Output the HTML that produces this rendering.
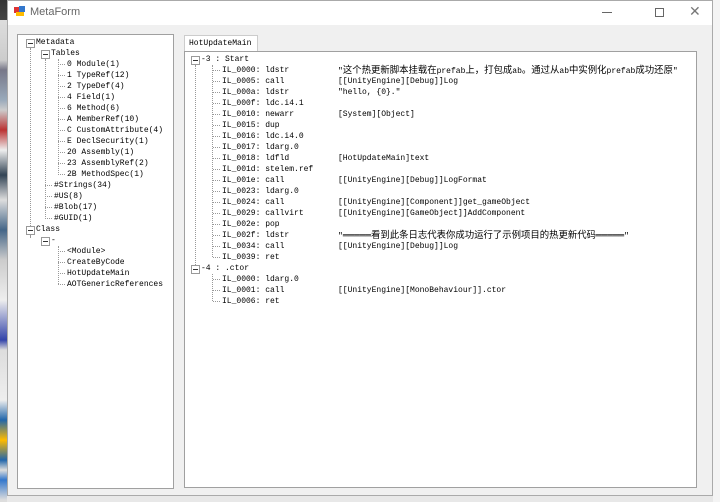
<!DOCTYPE html>
<html><head><meta charset="utf-8"><style>
*{margin:0;padding:0;box-sizing:border-box}
body{width:720px;height:502px;overflow:hidden;background:#e8e8e8;position:relative;font-family:"Liberation Mono","Noto Sans CJK SC",monospace;font-size:8px;color:#000}
.a{position:absolute;white-space:nowrap}
#win{position:absolute;left:7px;top:0;width:706px;height:496px;background:#f0f0f0;border:1px solid #aaa}
#title{position:absolute;left:0;top:0;width:704px;height:24px;background:#fff}
.panel{position:absolute;background:#fff;border:1px solid #a0a0a0}
.t{position:absolute;white-space:nowrap;line-height:11px;height:11px}
.cn{font-family:"Liberation Mono","Noto Sans CJK SC",sans-serif}
.cn b{font-weight:normal;font-size:9.4px}
.ex{position:absolute;width:9px;height:9px;border:1px solid #999;background:#fff}
.ex:after{content:"";position:absolute;left:1px;top:3px;width:5px;height:1px;background:#333}
.vl{position:absolute;border-left:1px dotted #999}
.rows .t:before{content:"";position:absolute;left:-9px;top:5px;width:7px;border-top:1px dotted #999}
.op{position:absolute;left:116px}
</style></head><body>
<div class="a" style="left:0;top:0;width:7px;height:502px;background:linear-gradient(#333 0,#444 20px,#ddd 20px,#ccc 60px,#778 70px,#9ab 100px,#ccc 110px,#b33 130px,#eee 150px,#345 175px,#ddd 200px,#468 230px,#ccc 260px,#eee 300px,#34a 340px,#ddd 350px,#eee 400px,#26a 420px,#fb0 440px,#26a 460px,#ddd 470px,#37c 480px,#ddd 500px)"></div>
<div class="a" style="left:713px;top:0;width:7px;height:502px;background:#f4f4f4"></div>
<div id="win">
 <div id="title">
  <div class="a" style="left:6px;top:6px;width:6px;height:6px;background:#d33"></div>
  <div class="a" style="left:11px;top:5px;width:6px;height:6px;background:#37c"></div>
  <div class="a" style="left:8px;top:11px;width:8px;height:4px;background:#fb0"></div>
  <div class="a" style="left:22px;top:5px;font-family:'Liberation Sans',sans-serif;font-size:11px;color:#666">MetaForm</div>
  <div class="a" style="left:594px;top:11px;width:10px;height:1px;background:#666"></div>
  <div class="a" style="left:647px;top:7px;width:9px;height:9px;border:1px solid #666"></div>
  <div class="a" style="left:681px;top:2px;font-family:'Liberation Sans',sans-serif;font-size:14px;color:#777">✕</div>
 </div>
 <div class="panel" style="left:9px;top:33px;width:157px;height:455px">
  <div class="ex" style="left:8px;top:4px"></div>
  <div class="t" style="left:18px;top:2px">Metadata</div>
  <div class="vl" style="left:12px;top:13px;height:182px"></div>
  <div class="ex" style="left:23px;top:15px"></div>
  <div class="t" style="left:33px;top:13px">Tables</div>
  <div class="vl" style="left:27px;top:24px;height:160px"></div>
  <div class="vl" style="left:40px;top:24px;height:116px"></div>
  <div class="rows">
  <div class="t" style="left:49px;top:24px">0 Module(1)</div>
  <div class="t" style="left:49px;top:35px">1 TypeRef(12)</div>
  <div class="t" style="left:49px;top:46px">2 TypeDef(4)</div>
  <div class="t" style="left:49px;top:57px">4 Field(1)</div>
  <div class="t" style="left:49px;top:68px">6 Method(6)</div>
  <div class="t" style="left:49px;top:79px">A MemberRef(10)</div>
  <div class="t" style="left:49px;top:90px">C CustomAttribute(4)</div>
  <div class="t" style="left:49px;top:101px">E DeclSecurity(1)</div>
  <div class="t" style="left:49px;top:112px">20 Assembly(1)</div>
  <div class="t" style="left:49px;top:123px">23 AssemblyRef(2)</div>
  <div class="t" style="left:49px;top:134px">2B MethodSpec(1)</div>
  <div class="t" style="left:36px;top:145px">#Strings(34)</div>
  <div class="t" style="left:36px;top:156px">#US(8)</div>
  <div class="t" style="left:36px;top:167px">#Blob(17)</div>
  <div class="t" style="left:36px;top:178px">#GUID(1)</div>
  <div class="t" style="left:49px;top:211px">&lt;Module&gt;</div>
  <div class="t" style="left:49px;top:222px">CreateByCode</div>
  <div class="t" style="left:49px;top:233px">HotUpdateMain</div>
  <div class="t" style="left:49px;top:244px">AOTGenericReferences</div>
  </div>
  <div class="ex" style="left:8px;top:191px"></div>
  <div class="t" style="left:18px;top:189px">Class</div>
  <div class="vl" style="left:12px;top:200px;height:2px"></div>
  <div class="ex" style="left:23px;top:202px"></div>
  <div class="t" style="left:33px;top:200px">-</div>
  <div class="vl" style="left:40px;top:211px;height:38px"></div>
 </div>
 <div class="a" style="left:176px;top:34px;width:74px;height:17px;background:#fff;border:1px solid #ccc;border-bottom:none"></div>
 <div class="a" style="left:181px;top:37px;line-height:11px">HotUpdateMain</div>
 <div class="panel" style="left:176px;top:50px;width:513px;height:437px">
  <div class="ex" style="left:6px;top:4px"></div>
  <div class="t" style="left:16px;top:2px">-3 : Start</div>
  <div class="vl" style="left:10px;top:13px;height:202px"></div>
  <div class="vl" style="left:27px;top:13px;height:192px"></div>
  <div class="ex" style="left:6px;top:213px"></div>
  <div class="t" style="left:16px;top:211px">-4 : .ctor</div>
  <div class="vl" style="left:27px;top:222px;height:27px"></div>
  <div class="rows">
   <div class="t" style="left:37px;top:13px">IL_0000: ldstr<span class="op cn">"<b>这个热更新脚本挂载在</b>prefab<b>上，打包成</b>ab<b>。通过从</b>ab<b>中实例化</b>prefab<b>成功还原</b>"</span></div>
   <div class="t" style="left:37px;top:24px">IL_0005: call<span class="op">[[UnityEngine][Debug]]Log</span></div>
   <div class="t" style="left:37px;top:35px">IL_000a: ldstr<span class="op">"hello, {0}."</span></div>
   <div class="t" style="left:37px;top:46px">IL_000f: ldc.i4.1</div>
   <div class="t" style="left:37px;top:57px">IL_0010: newarr<span class="op">[System][Object]</span></div>
   <div class="t" style="left:37px;top:68px">IL_0015: dup</div>
   <div class="t" style="left:37px;top:79px">IL_0016: ldc.i4.0</div>
   <div class="t" style="left:37px;top:90px">IL_0017: ldarg.0</div>
   <div class="t" style="left:37px;top:101px">IL_0018: ldfld<span class="op">[HotUpdateMain]text</span></div>
   <div class="t" style="left:37px;top:112px">IL_001d: stelem.ref</div>
   <div class="t" style="left:37px;top:123px">IL_001e: call<span class="op">[[UnityEngine][Debug]]LogFormat</span></div>
   <div class="t" style="left:37px;top:134px">IL_0023: ldarg.0</div>
   <div class="t" style="left:37px;top:145px">IL_0024: call<span class="op">[[UnityEngine][Component]]get_gameObject</span></div>
   <div class="t" style="left:37px;top:156px">IL_0029: callvirt<span class="op">[[UnityEngine][GameObject]]AddComponent</span></div>
   <div class="t" style="left:37px;top:167px">IL_002e: pop</div>
   <div class="t" style="left:37px;top:178px">IL_002f: ldstr<span class="op cn">"<b>═════看到此条日志代表你成功运行了示例项目的热更新代码═════</b>"</span></div>
   <div class="t" style="left:37px;top:189px">IL_0034: call<span class="op">[[UnityEngine][Debug]]Log</span></div>
   <div class="t" style="left:37px;top:200px">IL_0039: ret</div>
   <div class="t" style="left:37px;top:222px">IL_0000: ldarg.0</div>
   <div class="t" style="left:37px;top:233px">IL_0001: call<span class="op">[[UnityEngine][MonoBehaviour]].ctor</span></div>
   <div class="t" style="left:37px;top:244px">IL_0006: ret</div>
  </div>
 </div>
</div>
</body></html>
